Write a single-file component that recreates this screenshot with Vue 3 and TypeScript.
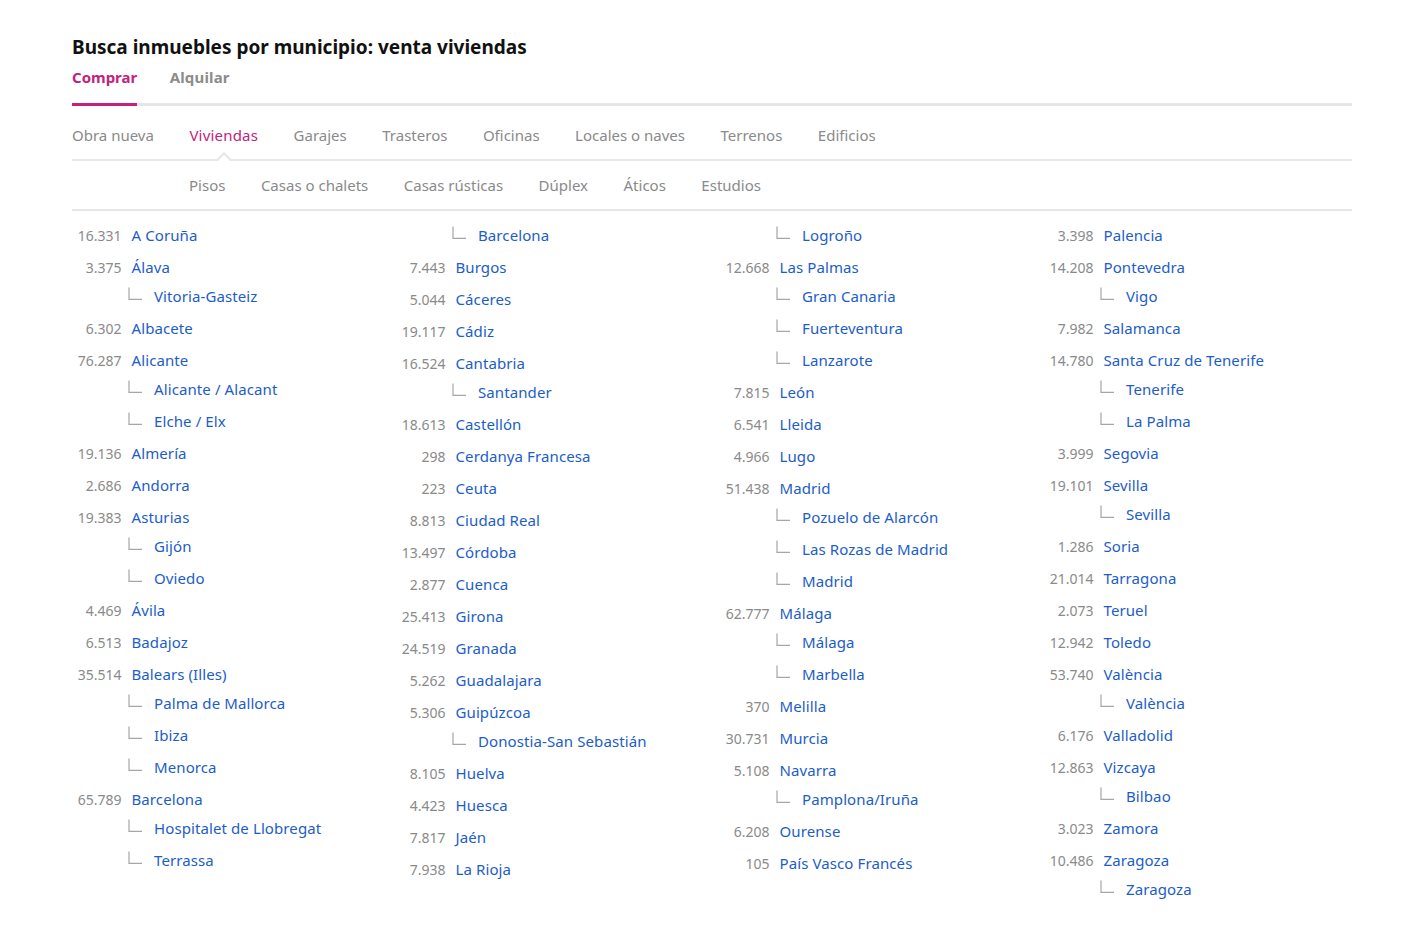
<script setup lang="ts">
type Row = { n?: string; name: string; kids?: string[] };
const toRows = (s: string): Row[] => {
  const out: Row[] = [];
  for (const part of s.split('|')) {
    if (part.startsWith('>')) {
      const last = out[out.length - 1];
      if (last) { (last.kids = last.kids || []).push(part.slice(1)); }
      else out.push({ name: '', kids: [part.slice(1)] });
    } else {
      const i = part.indexOf(' ');
      out.push({ n: part.slice(0, i), name: part.slice(i + 1) });
    }
  }
  return out;
};
const columns: Row[][] = [
  '16.331 A Coruña|3.375 Álava|>Vitoria-Gasteiz|6.302 Albacete|76.287 Alicante|>Alicante / Alacant|>Elche / Elx|19.136 Almería|2.686 Andorra|19.383 Asturias|>Gijón|>Oviedo|4.469 Ávila|6.513 Badajoz|35.514 Balears (Illes)|>Palma de Mallorca|>Ibiza|>Menorca|65.789 Barcelona|>Hospitalet de Llobregat|>Terrassa',
  '>Barcelona|7.443 Burgos|5.044 Cáceres|19.117 Cádiz|16.524 Cantabria|>Santander|18.613 Castellón|298 Cerdanya Francesa|223 Ceuta|8.813 Ciudad Real|13.497 Córdoba|2.877 Cuenca|25.413 Girona|24.519 Granada|5.262 Guadalajara|5.306 Guipúzcoa|>Donostia-San Sebastián|8.105 Huelva|4.423 Huesca|7.817 Jaén|7.938 La Rioja',
  '>Logroño|12.668 Las Palmas|>Gran Canaria|>Fuerteventura|>Lanzarote|7.815 León|6.541 Lleida|4.966 Lugo|51.438 Madrid|>Pozuelo de Alarcón|>Las Rozas de Madrid|>Madrid|62.777 Málaga|>Málaga|>Marbella|370 Melilla|30.731 Murcia|5.108 Navarra|>Pamplona/Iruña|6.208 Ourense|105 País Vasco Francés',
  '3.398 Palencia|14.208 Pontevedra|>Vigo|7.982 Salamanca|14.780 Santa Cruz de Tenerife|>Tenerife|>La Palma|3.999 Segovia|19.101 Sevilla|>Sevilla|1.286 Soria|21.014 Tarragona|2.073 Teruel|12.942 Toledo|53.740 València|>València|6.176 Valladolid|12.863 Vizcaya|>Bilbao|3.023 Zamora|10.486 Zaragoza|>Zaragoza',
].map(toRows);
const kinds = ['Obra nueva', 'Viviendas', 'Garajes', 'Trasteros', 'Oficinas', 'Locales o naves', 'Terrenos', 'Edificios'];
const subs = ['Pisos', 'Casas o chalets', 'Casas rústicas', 'Dúplex', 'Áticos', 'Estudios'];
</script>

<template>
  <main class="page">
    <h1 class="title">Busca inmuebles por municipio: venta viviendas</h1>
    <nav class="ops">
      <a class="op active">Comprar</a>
      <a class="op">Alquilar</a>
    </nav>
    <nav class="kinds">
      <a v-for="k in kinds" :key="k" class="tab" :class="{ on: k === 'Viviendas' }">{{ k }}</a>
    </nav>
    <nav class="subs">
      <a v-for="s in subs" :key="s" class="tab">{{ s }}</a>
    </nav>
    <div class="grid">
      <ul v-for="(col, c) in columns" :key="c" class="col">
        <li v-for="(r, i) in col" :key="i" class="entry">
          <div v-if="r.n" class="row">
            <span class="num">{{ r.n }}</span>
            <a class="link">{{ r.name }}</a>
          </div>
          <ul v-if="r.kids" class="kids" :class="{ lead: !r.n }">
            <li v-for="k in r.kids" :key="k" class="kid">
              <svg class="elbow" width="14" height="13" viewBox="0 0 14 13" aria-hidden="true">
                <path d="M1 0.5V12.4H14" fill="none" stroke="#a6a6a6" stroke-width="1.2" />
              </svg>
              <a class="link">{{ k }}</a>
            </li>
          </ul>
        </li>
      </ul>
    </div>
  </main>
</template>

<style scoped>
.page {
  box-sizing: border-box;
  width: 1402px;
  height: 930px;
  padding: 34px 50px 0 72px;
  font-family: "Noto Sans", "Open Sans", sans-serif;
  font-size: 15px;
  color: #8a8a8a;
  overflow: hidden;
}
.title {
  margin: 0;
  font-size: 19px;
  line-height: 26px;
  font-weight: 700;
  color: #111;
}
.ops {
  display: flex;
  gap: 32.5px;
  height: 43px;
  border-bottom: 3px solid #e6e6e6;
}
.op {
  height: 43px;
  border-bottom: 3px solid transparent;
  font-size: 15px;
  line-height: 34px;
  font-weight: 700;
  color: #8c8c8c;
}
.op:not(.active) {
  letter-spacing: 0.15px;
}
.op.active {
  color: #c1237e;
  border-bottom-color: #c1237e;
}
.kinds,
.subs {
  display: flex;
  gap: 35.5px;
  border-bottom: 2px solid #e6e6e6;
}
.kinds {
  height: 53px;
  line-height: 58px;
}
.subs {
  height: 48px;
  padding-left: 117px;
  line-height: 48px;
}
.tab {
  position: relative;
  white-space: nowrap;
  color: #8a8a8a;
}
.tab.on {
  color: #c1237e;
  letter-spacing: 0.2px;
}
.tab.on::after {
  content: "";
  position: absolute;
  left: 50%;
  bottom: -5px;
  width: 10px;
  height: 10px;
  margin-left: -4.5px;
  background: #fff;
  border-top: 2px solid #e6e6e6;
  border-left: 2px solid #e6e6e6;
  transform: rotate(45deg);
  box-sizing: border-box;
}
.grid {
  display: grid;
  grid-template-columns: repeat(4, 324px);
  padding-top: 8px;
}
.col,
.kids {
  list-style: none;
  margin: 0;
  padding: 0;
}
.row {
  display: flex;
  align-items: baseline;
  height: 32px;
  line-height: 32px;
}
.num {
  width: 49.5px;
  margin-right: 10px;
  text-align: right;
  font-size: 14px;
  color: #8a8a8a;
}
.kids {
  margin-top: -3px;
  padding-left: 56px;
}
.kids.lead {
  margin-top: 0;
}
.kid {
  display: flex;
  height: 32px;
  line-height: 32px;
  position: relative;
}
.elbow {
  position: absolute;
  left: 0;
  top: 7px;
}
.link {
  color: #1c5dc9;
  white-space: nowrap;
  letter-spacing: 0.1px;
}
.kid .link {
  margin-left: 26px;
}
</style>
